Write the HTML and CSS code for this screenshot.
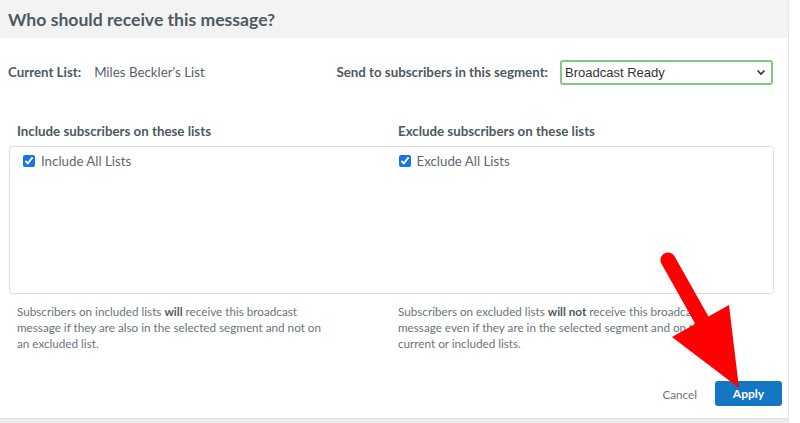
FILE: index.html
```html
<!DOCTYPE html>
<html>
<head>
<meta charset="utf-8">
<link rel="stylesheet" href="styles.css">
</head>
<body>
<div class="modal">
  <div class="header"><h1 class="title">Who should receive this message?</h1></div>
  <div class="body">
    <div class="row-top">
      <div class="current"><span class="lbl">Current List:</span><span class="val">Miles Beckler's List</span></div>
      <div class="segment">
        <span class="lbl">Send to subscribers in this segment:</span>
        <div class="select"><span>Broadcast Ready</span>
          <svg class="chev" width="10" height="7" viewBox="0 0 10 7"><path d="M1.5 1.5 L5 5 L8.5 1.5" fill="none" stroke="#333" stroke-width="1.6"/></svg>
        </div>
      </div>
    </div>
    <div class="cols-head">
      <div class="col-h">Include subscribers on these lists</div>
      <div class="col-h">Exclude subscribers on these lists</div>
    </div>
    <div class="box">
      <div class="boxcol"><label class="chk"><input type="checkbox" checked> <span>Include All Lists</span></label></div>
      <div class="boxcol"><label class="chk"><input type="checkbox" checked> <span>Exclude All Lists</span></label></div>
    </div>
    <div class="notes">
      <p class="note">Subscribers on included lists <b>will</b> receive this broadcast message if they are also in the selected segment and not on an excluded list.</p>
      <p class="note">Subscribers on excluded lists <b>will not</b> receive this broadcast message even if they are in the selected segment and on the current or included lists.</p>
    </div>
    <div class="footer">
      <span class="cancel">Cancel</span>
      <span class="apply">Apply</span>
    </div>
  </div>
  <div class="strip"></div>
</div>
<svg class="arrow" width="800" height="423" viewBox="0 0 800 423">
  <line x1="668" y1="260" x2="704" y2="324" stroke="#fe0000" stroke-width="15" stroke-linecap="round"/>
  <polygon points="729,305 672,337 739,388" fill="#fe0000"/>
</svg>
</body>
</html>
```
FILE: styles.css
```css
* { box-sizing: border-box; }
html, body { margin: 0; padding: 0; background: #fff; }
body { font-family: Lato, "Liberation Sans", sans-serif; color: #56616b; width: 800px; height: 423px; overflow: hidden; position: relative; }
.modal { width: 789px; height: 423px; border-right: 1px solid #e4e4e4; display: flex; flex-direction: column; }
.header { background: #f3f3f3; height: 38px; display: flex; align-items: center; padding-left: 8px; }
.title { margin: 0; font-size: 17.6px; font-weight: 700; color: #4d5963; }
.body { flex: 1; display: flex; flex-direction: column; }
.row-top { display: flex; justify-content: space-between; align-items: center; margin-top: 22px; height: 24px; padding: 0 15px 0 8px; }
.lbl { font-weight: 700; font-size: 13.3px; color: #4d5963; }
.val { font-size: 13.3px; margin-left: 13px; color: #56616b; }
.current { display: flex; align-items: center; }
.segment { display: flex; align-items: center; }
.select { width: 213px; height: 25px; margin-left: 12px; border: 2px solid #84c884; border-radius: 3px; display: flex; align-items: center; justify-content: space-between; padding: 0 5px 0 3px; font-family: "Liberation Sans", Arial, sans-serif; font-size: 13px; color: #333; }
.cols-head { display: flex; padding: 0 0 0 17px; margin-top: 39px; }
.col-h { width: 381px; font-weight: 700; font-size: 13.3px; color: #4d5963; }
.box { margin: 7px 14px 0 9px; height: 148px; border: 1px solid #dedede; border-radius: 4px; display: flex; padding: 6px 0 0 12px; }
.boxcol { width: 382px; }
.chk { display: flex; align-items: center; font-size: 13.3px; color: #5e6870; }
.chk input { margin: 0 6px 0 1px; width: 12px; height: 12px; accent-color: #1a73e8; }
.notes { display: flex; padding-left: 17px; margin-top: 9px; }
.note { width: 381px; margin: 0; font-size: 11.7px; line-height: 16px; color: #6a747c; padding-right: 62px; }
.note b { color: #4d5963; }
.footer { display: flex; justify-content: flex-end; align-items: center; margin-top: auto; padding: 0 6px 12px 0; }
.cancel { font-size: 11.7px; color: #6a747c; margin-right: 18px; }
.apply { width: 67px; height: 25px; background: #1577c4; border-radius: 3px; color: #fff; font-weight: 700; font-size: 12px; display: flex; align-items: center; justify-content: center; }
.strip { height: 5px; background: #ececec; border-top: 1px solid #e2e2e2; }
.arrow { position: absolute; left: 0; top: 0; pointer-events: none; }
```
